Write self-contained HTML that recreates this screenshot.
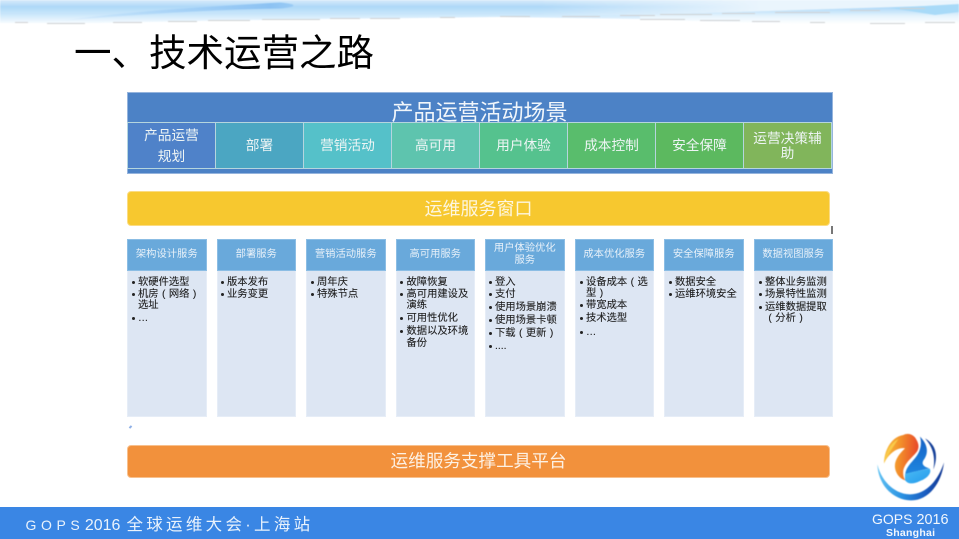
<!DOCTYPE html>
<html lang="zh"><head><meta charset="utf-8"><title>技术运营之路</title>
<style>
*{margin:0;padding:0;box-sizing:border-box}
html,body{width:959px;height:539px;overflow:hidden;background:#fff}
body{position:relative;font-family:"Liberation Sans","Noto Sans CJK SC",sans-serif}
.a{position:absolute}
.title{left:74px;top:28px;font-size:37.500px;line-height:50px;color:#000;white-space:nowrap}
.c{display:flex;align-items:center;justify-content:center;text-align:center;color:#eef5f5;font-size:13.700px;line-height:21px;border:1px solid #b5d5de;filter:blur(.3px);width:89px;height:47px;top:122px}
.h{display:flex;align-items:center;justify-content:center;text-align:center;color:#e8f1f9;background:#69a9db;font-size:10.300px;line-height:12px;border:1px solid #8bbde4;filter:blur(.35px);width:79.500px;height:32px;top:239px}
.b{background:#dde6f3;border:1px solid #e6edf7;border-top:0;width:79.500px;height:146px;top:271px}
.l{position:absolute;color:#1c1c1c;font-size:10.300px;line-height:12px;white-space:nowrap;filter:blur(.3px);margin-top:1px;-webkit-text-stroke:.1px #1c1c1c}
.l i{position:absolute;left:-6.500px;top:4px;width:3px;height:3px;border-radius:50%;background:#222}
.l s{display:inline-block;width:1em;text-align:center;text-decoration:none}
</style></head><body>

<svg class="a" style="left:0;top:0;filter:blur(.5px)" width="959" height="26" viewBox="0 0 959 26">
<defs>
<linearGradient id="g1" x1="0" y1="0" x2="0" y2="1"><stop offset="0" stop-color="#d8ebfb"/><stop offset=".28" stop-color="#aed8f8"/><stop offset=".6" stop-color="#cbe7fb"/><stop offset="1" stop-color="#fafdff"/></linearGradient>
<linearGradient id="g2" x1="0" y1="0" x2="1" y2="0"><stop offset="0" stop-color="#aad4f8" stop-opacity=".1"/><stop offset=".9" stop-color="#8cc2f3"/><stop offset="1" stop-color="#9acbf5"/></linearGradient>
<linearGradient id="g3" gradientUnits="userSpaceOnUse" x1="540" y1="0" x2="760" y2="0"><stop offset="0" stop-color="#eaf5fd" stop-opacity="0"/><stop offset="1" stop-color="#eaf5fd"/></linearGradient>
<linearGradient id="g4" gradientUnits="userSpaceOnUse" x1="0" y1="8" x2="0" y2="24"><stop offset="0" stop-color="#c4e4fa" stop-opacity="0"/><stop offset=".5" stop-color="#e6f4fd"/><stop offset="1" stop-color="#fff"/></linearGradient>
</defs>
<path d="M0 0H959V24L800 24 700 21 640 19 500 17 420 18 320 19 200 21 100 23 0 23Z" fill="url(#g1)"/>
<path d="M540 0H959V5L800 10 640 15 540 16Z" fill="url(#g3)"/>
<path d="M640 15 800 10 959 5V24L800 24 700 21 640 19Z" fill="url(#g4)"/>
<path d="M890 8 959 4V12L935 15Z" fill="#a8daf8"/>
<path d="M60 21C120 12 200 7 280 2.500 298 4 298 7 280 8.500 200 10 130 15 60 21Z" fill="url(#g2)"/>
<g stroke="#cfd1d3" stroke-width="1" fill="none">
<path d="M15 22.500H28M47 23.500H85M113 22.500H142M168 21.500H197M208 20.500H250M262 19.500H320M330 18.500H360M370 18.500H400M440 17.500H455M500 16.500H530M562 16.500H600M620 15.500H655M660 14.500H712M722 13.500H755M775 12.500H830M850 10.500H880M900 8.500H925"/>
<path d="M640 19.500H685M700 20.500H740M752 21.500H780M810 22.500H825M870 23.500H905M925 22.500H955"/>
</g>
</svg>

<div class="a title">一、技术运营之路</div>

<!-- table -->
<div class="a" style="left:127px;top:92px;width:705.500px;height:82px;background:#4c82c6;border:1px solid #95b4dd"></div>
<div class="a" style="left:127px;top:92px;width:705px;height:31px;overflow:hidden;text-align:center;color:#f1f6fb;font-size:22px;line-height:41px;filter:blur(.3px)">产品运营活动场景</div>
<div class="a c" style="left:127px;background:#4f82c9"><span style="margin-top:1px">产品运营<br>规划</span></div>
<div class="a c" style="left:215px;background:#4ba6c2">部署</div>
<div class="a c" style="left:303px;background:#55c1c9">营销活动</div>
<div class="a c" style="left:391px;background:#5ec4ae">高可用</div>
<div class="a c" style="left:479px;background:#55c28e">用户体验</div>
<div class="a c" style="left:567px;background:#59bd6c">成本控制</div>
<div class="a c" style="left:655px;background:#5cb95f">安全保障</div>
<div class="a c" style="left:743px;background:#81b55b;line-height:15px;padding:0 6px">运营决策辅助</div>

<!-- yellow -->
<div class="a" style="left:127px;top:191px;width:703px;height:34.500px;background:#f7c82f;border:1px solid #fbdc82;border-radius:4px;color:#fdf6df;font-size:18px;line-height:34px;text-align:center;filter:blur(.3px)">运维服务窗口</div>
<div class="a" style="left:831px;top:226px;width:1.500px;height:8px;background:#777"></div>

<!-- columns -->
<div class="a h" style="left:127px">架构设计服务</div><div class="a b" style="left:127px"></div>
<div class="a h" style="left:216.500px">部署服务</div><div class="a b" style="left:216.500px"></div>
<div class="a h" style="left:306px">营销活动服务</div><div class="a b" style="left:306px"></div>
<div class="a h" style="left:395.500px">高可用服务</div><div class="a b" style="left:395.500px"></div>
<div class="a h" style="left:485px">用户体验优化<br>服务</div><div class="a b" style="left:485px"></div>
<div class="a h" style="left:574.500px">成本优化服务</div><div class="a b" style="left:574.500px"></div>
<div class="a h" style="left:664px">安全保障服务</div><div class="a b" style="left:664px"></div>
<div class="a h" style="left:753.500px">数据视图服务</div><div class="a b" style="left:753.500px"></div>

<div class="l" style="left:138px;top:276px"><i></i>软硬件选型</div>
<div class="l" style="left:138px;top:288px"><i></i>机房<s>(</s>网络<s>)</s></div>
<div class="l" style="left:138px;top:299px">选址</div>
<div class="l" style="left:138px;top:312px"><i></i>…</div>

<div class="l" style="left:227px;top:276px"><i></i>版本发布</div>
<div class="l" style="left:227px;top:288px"><i></i>业务变更</div>

<div class="l" style="left:317px;top:276px"><i></i>周年庆</div>
<div class="l" style="left:317px;top:288px"><i></i>特殊节点</div>

<div class="l" style="left:406.500px;top:276px"><i></i>故障恢复</div>
<div class="l" style="left:406.500px;top:288px"><i></i>高可用建设及</div>
<div class="l" style="left:406.500px;top:299px">演练</div>
<div class="l" style="left:406.500px;top:312px"><i></i>可用性优化</div>
<div class="l" style="left:406.500px;top:325px"><i></i>数据以及环境</div>
<div class="l" style="left:406.500px;top:337px">备份</div>

<div class="l" style="left:495px;top:276px"><i></i>登入</div>
<div class="l" style="left:495px;top:288px"><i></i>支付</div>
<div class="l" style="left:495px;top:301px"><i></i>使用场景崩溃</div>
<div class="l" style="left:495px;top:314px"><i></i>使用场景卡顿</div>
<div class="l" style="left:495px;top:327px"><i></i>下载<s>(</s>更新<s>)</s></div>
<div class="l" style="left:495px;top:340px"><i></i>....</div>

<div class="l" style="left:586px;top:276px"><i></i>设备成本<s>(</s>选</div>
<div class="l" style="left:586px;top:287px">型<s>)</s></div>
<div class="l" style="left:586px;top:299px"><i></i>带宽成本</div>
<div class="l" style="left:586px;top:312px"><i></i>技术选型</div>
<div class="l" style="left:586px;top:326px"><i></i>…</div>

<div class="l" style="left:675px;top:276px"><i></i>数据安全</div>
<div class="l" style="left:675px;top:288px"><i></i>运维环境安全</div>

<div class="l" style="left:765px;top:276px"><i></i>整体业务监测</div>
<div class="l" style="left:765px;top:288px"><i></i>场景特性监测</div>
<div class="l" style="left:765px;top:301px"><i></i>运维数据提取</div>
<div class="l" style="left:765px;top:312px"><s>(</s>分析<s>)</s></div>

<div class="a" style="left:129px;top:426px;width:3px;height:2px;background:#8fb0e6;transform:rotate(-45deg)"></div>

<!-- orange -->
<div class="a" style="left:127px;top:445px;width:703px;height:33px;background:#f2913c;border:1px solid #f8c08d;border-radius:4px;color:#fdf1e4;font-size:17.600px;line-height:31px;text-align:center;filter:blur(.3px)">运维服务支撑工具平台</div>

<!-- logo -->
<svg class="a" style="left:870px;top:425px;filter:blur(.4px)" width="80" height="80" viewBox="0 0 240 240">
<defs>
<linearGradient id="r" x1="0" y1="0" x2="1" y2=".1"><stop offset="0" stop-color="#66c6f4"/><stop offset=".45" stop-color="#2a92e2"/><stop offset=".8" stop-color="#1a5cc0"/><stop offset="1" stop-color="#0f3590"/></linearGradient>
<linearGradient id="f" x1="0" y1=".4" x2="1" y2=".5"><stop offset="0" stop-color="#f8c040"/><stop offset=".45" stop-color="#f2902a"/><stop offset="1" stop-color="#e8452a"/></linearGradient>
<linearGradient id="bb" x1="0" y1="0" x2="0" y2="1"><stop offset="0" stop-color="#1460c4"/><stop offset="1" stop-color="#1f86e0"/></linearGradient>
<linearGradient id="lb" x1="0" y1="0" x2="1" y2="1"><stop offset="0" stop-color="#4cbcf4"/><stop offset="1" stop-color="#2299ec"/></linearGradient>
</defs>
<path d="M22 118C25 185 75 228 125 226 175 226 215 175 222 112 205 165 170 207 120 208 75 208 35 170 22 118Z" fill="url(#r)"/>
<path d="M42 115C42 75 65 35 100 30 115 22 132 30 138 42 146 55 148 65 142 78 128 98 108 108 100 135 98 150 102 160 106 166 85 160 70 135 76 112 82 92 95 80 105 70 85 66 58 82 42 115Z" fill="url(#f)"/>
<path d="M42 115C45 85 60 55 85 42 72 62 55 85 42 115Z" fill="#f9ca4a"/>
<path d="M150 35C170 55 178 80 163 102 152 116 160 125 178 130 150 136 125 142 106 147 108 125 128 110 140 93 152 76 156 55 150 35Z" fill="url(#bb)"/>
<path d="M165 40C192 55 209 85 190 134 197 95 188 65 165 40Z" fill="#143f98"/>
<path d="M105 147C125 142 150 136 179 131 186 142 174 160 150 168 134 176 114 180 105 165Z" fill="url(#lb)"/>
</svg>

<!-- footer -->
<div class="a" style="left:0;top:507px;width:959px;height:32px;background:#3a86e4"></div>
<div class="a" style="left:25.500px;top:515px;color:#e9f2fc;font-size:16px;line-height:20px;white-space:nowrap;filter:blur(.2px)"><span style="font-size:14px;letter-spacing:4.600px">GOPS</span><span style="margin-left:.5px">2016</span><span style="font-size:16.500px;letter-spacing:3.300px;margin-left:6px">全球运维大会·上海站</span></div>
<div class="a" style="left:872px;top:512px;color:#f2f7fd;font-size:14.400px;line-height:14px;white-space:nowrap;filter:blur(.2px)"><span style="font-size:14px">GOPS</span><span style="margin-left:4px">2016</span></div>
<div class="a" style="left:886px;top:527px;color:#f2f7fd;font-size:10.500px;line-height:12px;font-weight:700;letter-spacing:.25px;white-space:nowrap">Shanghai</div>
</body></html>
